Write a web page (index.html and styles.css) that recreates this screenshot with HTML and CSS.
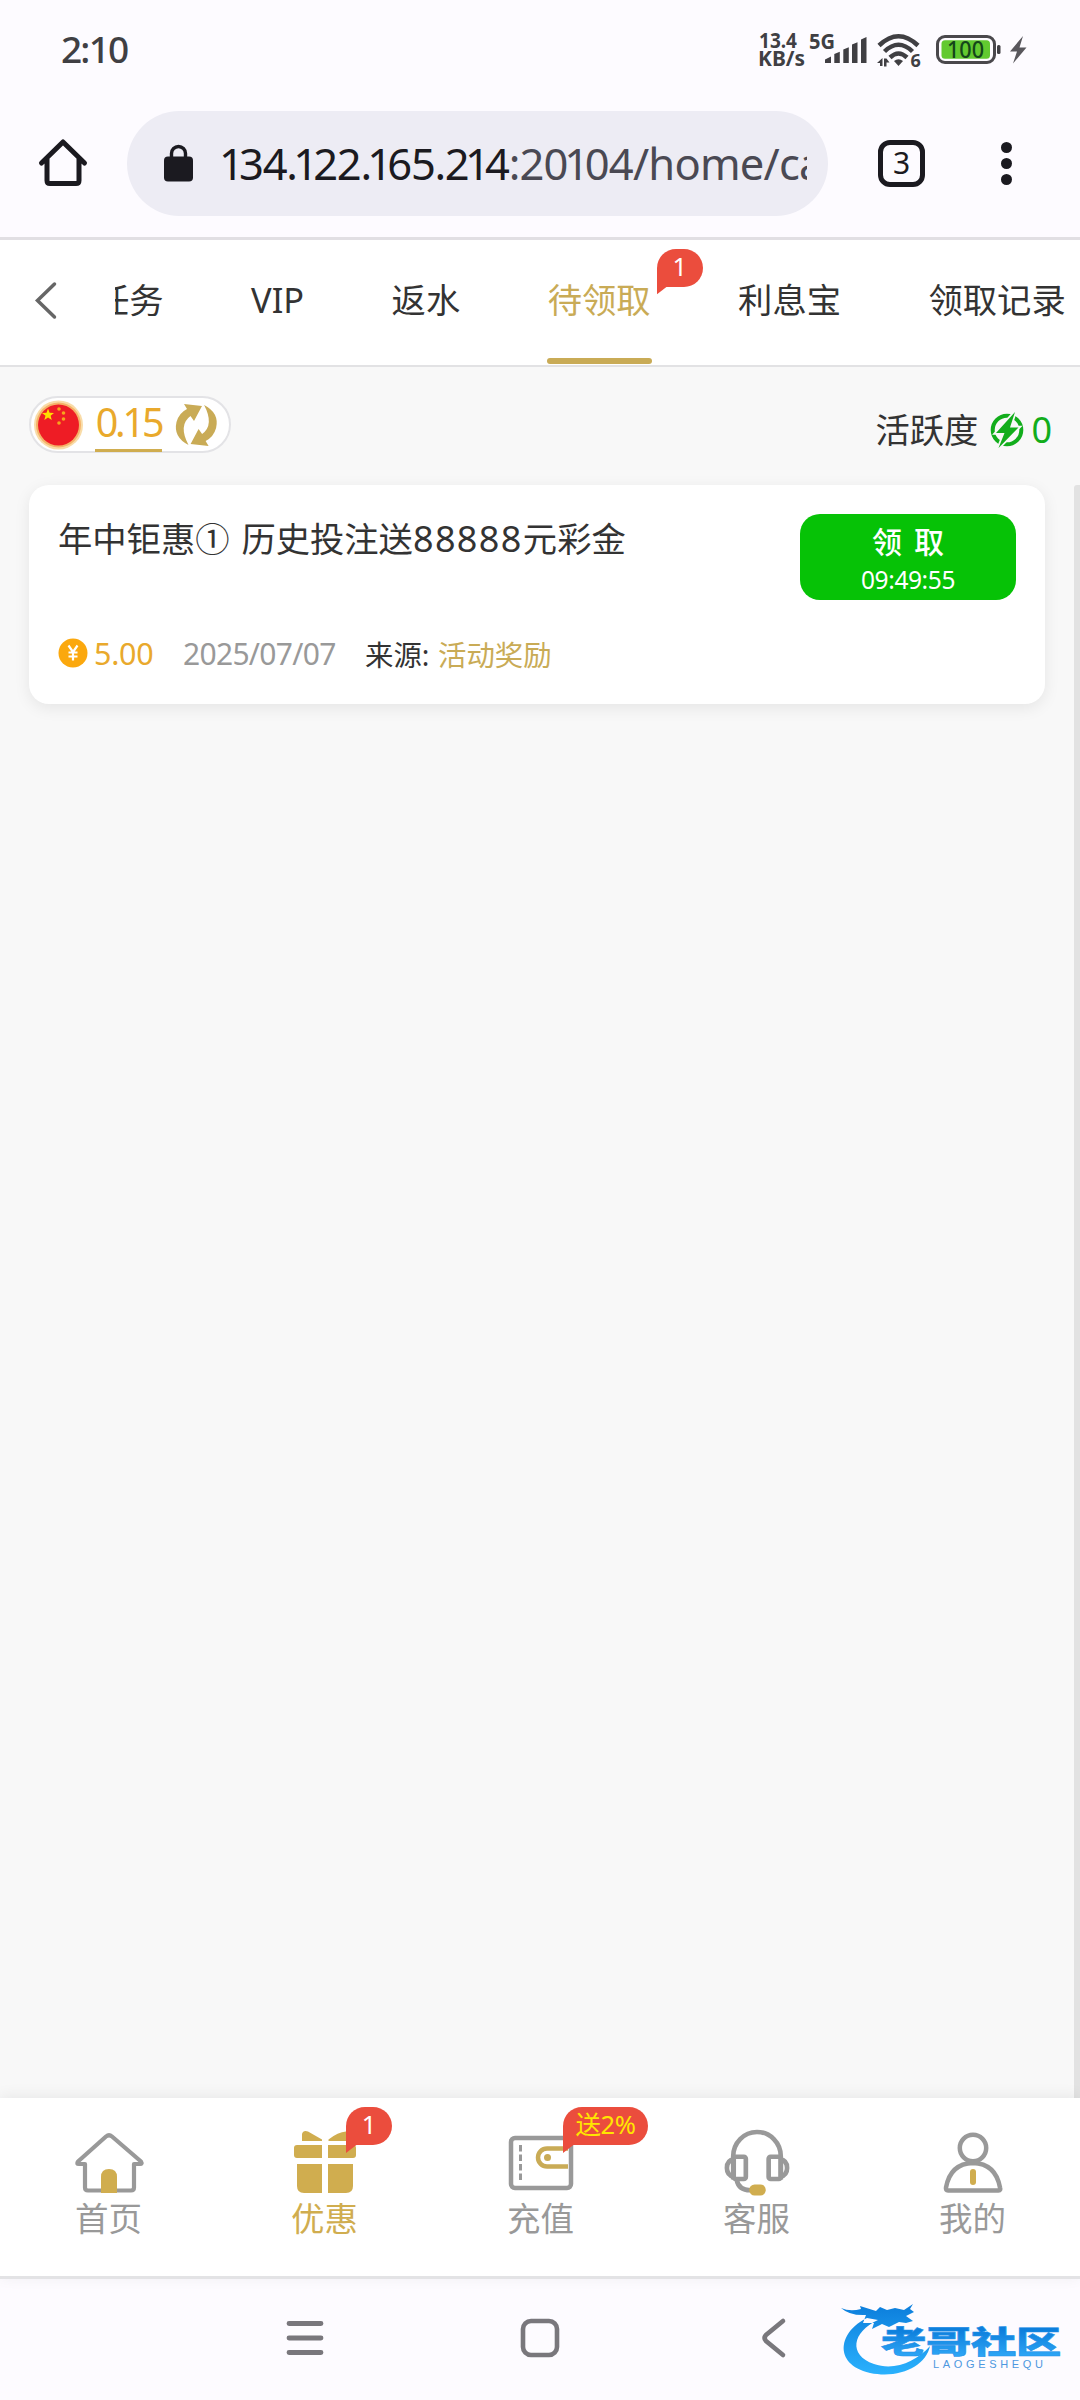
FILE: index.html
```html
<!DOCTYPE html>
<html lang="zh-CN">
<head>
<meta charset="utf-8">
<title>待领取</title>
<link rel="stylesheet" href="styles.css">
</head>
<body>
<div class="screen">
  <header class="status">
    <span class="clock">2:10</span>
    <div class="status-icons">
      <svg class="net" width="50" height="40" viewBox="0 0 50 40">
        <text x="0" y="17.500" textLength="38" lengthAdjust="spacingAndGlyphs">13.4</text>
        <text x="-1" y="36" textLength="47" lengthAdjust="spacingAndGlyphs">KB/s</text>
      </svg>
      <svg class="signal" width="60" height="40" viewBox="0 0 60 40">
        <text x="0" y="18.500" textLength="26" lengthAdjust="spacingAndGlyphs">5G</text>
        <path d="M16 33v-3.500l6-3V33zM25.300 33V24l5.500-2.200V33zM34.300 33V19.500l5.500-2.200V33zM43 33V14.500l5.500-2.200V33zM52 33V9.500l5.500-2.500V33z"/>
      </svg>
      <svg class="wifi" width="46" height="40" viewBox="0 0 46 40">
        <g fill="none" stroke="#403f43" stroke-width="4.500">
          <path d="M3 15.500Q22.500-3 42 15.500"/>
          <path d="M8.500 21.500Q22.500 8 36.500 21.500"/>
          <path d="M14 27.500Q22.500 19.500 31 27.500"/>
        </g>
        <path d="M18 31Q22.500 27.500 27 31L22.500 36z"/>
        <path d="M1 33L6.500 28v8h-2.500v-3zM8 28.500h2.500v8H8zM10.500 28.500l3 4h-3z"/>
        <text class="wifi-gen" x="34.500" y="36.500">6</text>
      </svg>
      <svg class="battery" width="64" height="30" viewBox="0 0 64 30">
        <rect x="1.500" y="1.500" width="57" height="26" rx="7.500" fill="none" stroke="#4a484c" stroke-width="3"/>
        <rect x="5.500" y="5.300" width="48.500" height="18.400" rx="3.500" fill="#62c930"/>
        <text x="11" y="23" textLength="37" lengthAdjust="spacingAndGlyphs">100</text>
        <rect x="61" y="10" width="3.500" height="9" rx="1.500"/>
      </svg>
      <svg class="bolt" width="18" height="28" viewBox="0 0 18 28"><path d="M14 0L1 15.500h7L4 27.500 17.500 11.500h-7z"/></svg>
    </div>
  </header>

  <div class="browser">
    <svg class="home" width="48" height="48" viewBox="0 0 48 48"><path d="M2.500 24L24 3l21.500 21M8 20v21.500q0 3 3 3h26q3 0 3-3V20" fill="none" stroke="#1b1a20" stroke-width="5" stroke-linejoin="round" stroke-linecap="round"/></svg>
    <div class="address">
      <svg class="lock" width="29" height="38" viewBox="0 0 29 38"><path d="M7.500 15V9.500a7 7 0 0 1 14 0V15" fill="none" stroke="#1b1a20" stroke-width="3.400"/><rect x="0" y="12.500" width="29" height="25" rx="4" fill="#1b1a20"/></svg>
      <div class="url"><b><i>1</i>34.<i>1</i>22.<i>1</i>65.2<i>1</i>4</b><span>:20<i>1</i>04/home/ca</span></div>
    </div>
    <div class="tab-count">3</div>
    <div class="dots"><i></i><i></i><i></i></div>
  </div>

  <nav class="tabs">
    <svg class="back" width="22" height="37" viewBox="0 0 22 37"><path d="M19.500 2L2.500 18.500l17 16.500" fill="none" stroke="#666" stroke-width="3.500" stroke-linecap="round"/></svg>
    <div class="tab-scroll">
      <span class="tab">任务</span>
      <span class="tab">VIP</span>
      <span class="tab">返水</span>
      <span class="tab active">待领取<em class="bubble tab-bubble">1</em></span>
      <span class="tab">利息宝</span>
      <span class="tab">领取记录</span>
    </div>
  </nav>

  <main class="content">
    <div class="summary">
      <div class="wallet">
        <svg width="50" height="50" viewBox="0 0 50 50">
          <circle cx="25.500" cy="25" r="24.500" fill="#f9dca8"/>
          <circle cx="25.500" cy="25" r="22.500" fill="#f5b268"/>
          <circle cx="25.500" cy="25" r="20.500" fill="#ee1c25"/>
          <path fill="#ffde00" d="M15 8.500l1.600 4.200 4.400.200-3.400 2.800 1.200 4.300-3.800-2.400-3.700 2.400 1.200-4.300L9 12.900l4.500-.200z"/>
          <g fill="#f7a51d"><circle cx="26" cy="9" r="1.800"/><circle cx="30.500" cy="13" r="1.800"/><circle cx="30.500" cy="19" r="1.800"/><circle cx="26" cy="23" r="1.800"/></g>
        </svg>
        <span class="balance">0.15</span>
        <svg width="42" height="42" viewBox="0 0 42 42" fill="#c9ab56"><path d="M8 0L26 2 18 17 14.500 12Q2 21 12.500 41-3 33 .500 18 3 9 11 5z"/><path transform="rotate(180 20.300 21)" d="M8 0L26 2 18 17 14.500 12Q2 21 12.500 41-3 33 .500 18 3 9 11 5z"/></svg>
      </div>
      <div class="activity">
        <span>活跃度</span>
        <svg width="34" height="36" viewBox="0 0 34 36"><circle cx="17" cy="18" r="14.300" fill="none" stroke="#12ad1c" stroke-width="4"/><path class="charge" d="M25 0L6 21h8.500L8.500 36 28.500 15.500H20z"/></svg>
        <b>0</b>
      </div>
    </div>
    <article class="card">
      <div class="card-top">
        <h2>年中钜惠① 历史投注送<span class="num">88888</span>元彩金</h2>
        <button class="claim"><strong>领 取</strong><small>09:49:55</small></button>
      </div>
      <div class="meta">
        <svg width="30" height="30" viewBox="0 0 30 30"><circle cx="15" cy="15" r="14.500" fill="#fba80e"/><path d="M10.500 7.500L15 14l4.500-6.500M15 14v8.500M10.500 14.500h9M10.500 18.500h9" fill="none" stroke="#fff" stroke-width="2.200"/></svg>
        <span class="amount">5.00</span>
        <span class="date">2025/07/07</span>
        <span class="source">来源:</span>
        <span class="gold">活动奖励</span>
      </div>
    </article>
    <div class="scrollbar"></div>
  </main>

  <nav class="bottom">
    <a class="item">
      <svg width="70" height="66" viewBox="0 0 70 66"><path d="M32 5.500L4 30.500q-2 2.500 1 2.500h6v23.500q0 3 3 3h43q3 0 3-3V33h6q2.500 0 1-2.500L38 5.500q-3-2.500-6 0z" fill="none" stroke="#999" stroke-width="4.200" stroke-linejoin="round"/><path d="M27 62V46q0-8 8-8t8 8v16z" fill="#d0ad4f"/></svg>
      <span>首页</span>
    </a>
    <a class="item on">
      <svg width="70" height="66" viewBox="0 0 70 66" fill="#d0ad4f"><path d="M12 10V3Q13-1 18 .500L32 8.500V10zM38.500 10V8.500Q48 1 56 .500L60 10zM7 14h25v13H7q-3 0-3-3v-7q0-3 3-3zM38 14h25q3 0 3 3v7q0 3-3 3H38zM7 33h25v29H14q-7 0-7-7zM38 33h25v22q0 7-7 7H38z"/></svg>
      <span>优惠</span>
      <em class="bubble gift-bubble">1</em>
    </a>
    <a class="item">
      <svg width="70" height="66" viewBox="0 0 70 66" fill="none"><rect x="5" y="7" width="60" height="50" rx="4" stroke="#999" stroke-width="4.500"/><path d="M14.500 14v38" stroke="#999" stroke-width="3" stroke-dasharray="6.500 3"/><path d="M62 17.500H41a9 9 0 0 0 0 18h21" stroke="#c9ab56" stroke-width="4.500"/><circle cx="41.500" cy="26.500" r="3.500" fill="#c9ab56"/></svg>
      <span>充值</span>
      <em class="bubble pay-bubble">送2%</em>
    </a>
    <a class="item">
      <svg width="70" height="68" viewBox="0 0 70 68" fill="none" stroke="#999" stroke-width="4.800"><path d="M10.500 50V26a24.500 25 0 0 1 49 0v24"/><rect x="11" y="26.500" width="12.500" height="23" rx="2"/><rect x="47" y="26.500" width="12.500" height="23" rx="2"/><path d="M11 29q-7 1.500-7 9t7 9M59 29q7 1.500 7 9t-7 9M14 50q2 11 14 11"/><rect x="27" y="55" width="17" height="11.500" rx="5.500" fill="#d0ad4f" stroke="none"/></svg>
      <span>客服</span>
    </a>
    <a class="item">
      <svg width="70" height="66" viewBox="0 0 70 66" fill="none" stroke="#999" stroke-width="4.500"><circle cx="35" cy="17" r="13.200"/><path d="M10 59.500h50.500q2.500 0 1.500-3-4.500-24-27-24.500Q12.500 32.500 8 56.500q-.500 3 2 3z"/><path d="M35 41v10" stroke="#d0ad4f" stroke-width="6" stroke-linecap="round"/></svg>
      <span>我的</span>
    </a>
  </nav>

  <footer class="system">
    <svg class="sys-menu" width="38" height="36" viewBox="0 0 38 36"><path d="M3 3.500h32M3 18h32M3 32.500h32" stroke="#79777c" stroke-width="4.800" stroke-linecap="round"/></svg>
    <svg class="sys-home" width="40" height="40" viewBox="0 0 40 40"><rect x="3" y="3" width="34" height="34" rx="8" fill="none" stroke="#79777c" stroke-width="4.600"/></svg>
    <svg class="sys-back" width="25" height="40" viewBox="0 0 25 40"><path d="M22 3L5 17q-3 3 0 6l17 14" fill="none" stroke="#79777c" stroke-width="4.600" stroke-linecap="round"/></svg>
    <svg class="logo" width="226" height="84" viewBox="0 0 226 84">
      <defs><linearGradient id="blue" gradientUnits="userSpaceOnUse" x1="0" y1="8" x2="0" y2="80"><stop offset="0" stop-color="#0d7fdc"/><stop offset="1" stop-color="#2cb4ff"/></linearGradient>
      <linearGradient id="word" x1="0" y1="0" x2="0" y2="1"><stop offset=".3" stop-color="#0d7fdc"/><stop offset="1" stop-color="#35aefb"/></linearGradient></defs>
      <path fill="url(#blue)" d="M27 20C-1 33-8 66 30 75 60 81 86 68 90 48 76 64 54 73 34 66 8 57 12 34 38 22zM1 10Q10 14 21 11L20 8 36 13 40 9 47 12 55 10 64 12 73 6 70 11 74 14 66 18 73 23 66 25 59 24 49 29 42 26 32 31 34 25 23 25 26 17Q10 18 1 10z"/>
      <text class="logo-name" transform="translate(41 55) scale(1.460 1)" x="0" y="0" textLength="123.500" fill="url(#word)">老哥社区</text>
      <text class="logo-sub" x="93" y="70" textLength="110">LAOGESHEQU</text>
    </svg>
  </footer>
</div>
</body>
</html>
```
FILE: styles.css
```css
* { box-sizing: border-box; }
body { margin: 0; background: #fdfbff; font-family: "Noto Sans", "Noto Sans CJK SC", sans-serif; color: #333; }
svg { display: block; flex: none; overflow: visible; }
em, i { font-style: normal; }
.screen { width: 1080px; height: 2400px; display: flex; flex-direction: column; overflow: hidden; }

.status { height: 98px; padding: 2px 53px 0 61px; display: flex; align-items: center; justify-content: space-between; }
.clock { margin-bottom: 3px; font-size: 37px; font-weight: 500; letter-spacing: -1.800px; color: #403f43; }
.status-icons { display: flex; align-items: center; fill: #403f43; }
.status-icons text { font-family: "Noto Sans", sans-serif; font-weight: 700; font-size: 21px; }
.wifi { margin-left: 7px; }
.status-icons .wifi-gen { font-size: 18px; }
.battery { margin-left: 14px; }
.status-icons .battery text { font-size: 23px; font-weight: 500; fill: #14451a; }
.bolt { margin-left: 9px; fill: #59575c; }

.browser { height: 142px; padding: 13px 68px 22px 39px; display: flex; align-items: center; border-bottom: 3px solid #e1dfe3; }
.home { margin-right: 40px; }
.address { width: 701px; height: 105px; padding: 0 21px 0 37px; border-radius: 53px; background: #edecf4; display: flex; align-items: center; }
.url { margin-left: 25px; padding-left: 3px; width: 589px; overflow: hidden; white-space: nowrap; font-size: 43.500px; line-height: 60px; letter-spacing: -1.300px; color: #4a4953; }
.url b { font-weight: 400; color: #1b1a20; }
.url i { margin: 0 -3.500px; }
.url span { letter-spacing: -.800px; }
.url b i:first-child { margin-left: -2px; }
.tab-count { margin-left: 50px; width: 47px; height: 47px; border: 5px solid #1b1a20; border-radius: 12px; font-size: 30px; line-height: 36px; text-align: center; color: #1b1a20; }
.dots { margin-left: auto; width: 11px; display: flex; flex-direction: column; gap: 5px; }
.dots i { height: 11px; border-radius: 50%; background: #1b1a20; }

.tabs { height: 127px; padding-left: 35px; display: flex; align-items: center; background: #fff; border-bottom: 2px solid #e2e2e4; }
.back { margin-bottom: 4px; }
.tab-scroll { margin-left: 58px; height: 125px; width: 965px; padding-bottom: 6px; display: flex; align-items: center; gap: 87.500px; overflow: hidden; font-size: 34.300px; }
.tab { flex: none; line-height: 60px; height: 60px; }
.tab:first-child { margin-left: -20px; }
.active { color: #c9ab56; position: relative; }
.active::after { content: ""; position: absolute; left: -1px; right: -1px; bottom: -34px; height: 6px; border-radius: 3px; background: #c9ab56; }
.bubble { position: absolute; height: 38px; border-radius: 20px 20px 20px 0; background: #eb4d3d; color: #fff; font-size: 25.500px; line-height: 35px; text-align: center; }
.bubble::after { content: ""; position: absolute; left: 0; bottom: -8px; width: 13px; height: 10px; background: inherit; clip-path: polygon(0 0, 100% 0, 0 100%); }
.tab-bubble { left: 109px; top: -21px; width: 46px; }

.content { position: relative; height: 1731px; background: #f8f8f8; }
.summary { height: 118px; padding: 0 28px 0 29px; display: flex; justify-content: space-between; align-items: flex-start; }
.wallet { margin-top: 29px; width: 202px; height: 57px; padding-left: 2px; border: 2px solid #e3e3e6; border-radius: 29px; background: #fff; display: flex; align-items: center; }
.balance { margin: 0 14px 0 12px; width: 67px; height: 55px; border-bottom: 3px solid #d0ad4f; font-size: 39.500px; line-height: 51px; letter-spacing: -3.200px; text-align: center; color: #e9a92c; }
.activity { margin-top: 39px; display: flex; align-items: center; font-size: 34.300px; line-height: 48px; }
.activity svg { margin: 0 7px 0 12px; }
.activity b { font-weight: 400; font-size: 36px; color: #12ad1c; }
.charge { fill: #12ad1c; stroke: #f8f8f8; stroke-width: 3.500px; paint-order: stroke; }
.card { margin-left: 29px; width: 1016px; height: 219px; padding: 29px 29px 0; border-radius: 20px; background: #fff; box-shadow: 0 4px 16px rgba(0,0,0,.08); }
.card-top { display: flex; justify-content: space-between; height: 86px; }
h2 { margin: 0; font-size: 34.300px; font-weight: 400; line-height: 50px; white-space: nowrap; word-spacing: 3px; }
.num { font-size: 36px; letter-spacing: 1.400px; }
.claim { width: 216px; height: 86px; padding: 9px 0 0; border: 0; border-radius: 20px; background: #06c206; color: #fff; font-family: inherit; display: flex; flex-direction: column; align-items: center; }
.claim strong { font-weight: 500; font-size: 30px; line-height: 38px; word-spacing: 4px; }
.claim small { font-size: 24.500px; line-height: 38px; letter-spacing: -.400px; }
.meta { margin-top: 32px; display: flex; align-items: center; height: 42px; font-size: 28.400px; white-space: nowrap; }
.amount { margin-left: 6px; width: 61px; font-size: 30.500px; letter-spacing: -.300px; color: #e9a92c; }
.date { margin-left: 28px; width: 153px; font-size: 30px; letter-spacing: -.700px; color: #999; }
.source { margin-left: 29px; width: 73px; }
.gold { color: #c9ab56; }
.scrollbar { position: absolute; right: 0; top: 118px; bottom: 0; width: 6px; border-radius: 3px 0 0 0; background: #e2e2e2; }

.bottom { position: relative; height: 181px; display: flex; background: #fff; border-bottom: 3px solid #e3e3e5; box-shadow: 0 -2px 14px rgba(0,0,0,.07); }
.item { position: relative; width: 216px; height: 178px; padding: 33px 0 0 1px; display: flex; flex-direction: column; align-items: center; font-size: 33.500px; color: #999; }
.item svg { height: 66px; }
.item span { line-height: 42px; }
.on { color: #d0ad4f; }
.gift-bubble { left: 130px; top: 9px; width: 46px; }
.pay-bubble { left: 131px; top: 9px; width: 85px; color: #ffe600; letter-spacing: -.500px; }

.system { height: 121px; display: flex; align-items: center; padding: 0 14px 4px 286px; }
.sys-home { margin-left: 196px; }
.sys-back { margin-left: 201px; }
.logo { margin: 4px 0 0 54px; }
.logo-name { font-family: "Noto Sans CJK SC", sans-serif; font-weight: 900; font-size: 31px; stroke: #2390e8; stroke-width: .6px; }
.logo-sub { font-family: "Liberation Sans", sans-serif; font-weight: 400; font-size: 11px; fill: #4d98e0; }
```
